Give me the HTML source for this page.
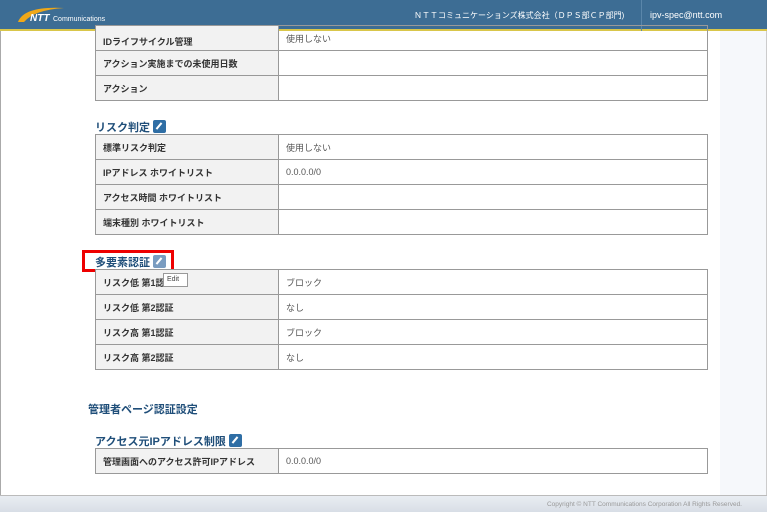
<!DOCTYPE html>
<html><head><meta charset="utf-8"><style>
*{margin:0;padding:0;box-sizing:border-box}
body{width:767px;height:512px;overflow:hidden;background:#fff;font-family:"Liberation Sans","Noto Sans CJK JP",sans-serif;position:relative}
.hdr{position:absolute;left:0;top:0;width:767px;height:31px;background:#3d6d94;border-bottom:2px solid #d9c64a}
.hdr .co{position:absolute;left:414px;top:10px;color:#fff;font-size:8px;white-space:nowrap}
.hdr .sep{position:absolute;left:641px;top:0;width:1px;height:31px;background:#5a86aa}
.hdr .em{position:absolute;left:650px;top:10px;color:#fff;font-size:9px}
.right{position:absolute;left:720px;top:31px;width:47px;height:464px;background:#f6f8fb;border-right:1px solid #ccc}
.left{position:absolute;left:0;top:31px;width:1px;height:464px;background:#aaa}
table{position:absolute;left:95px;width:613px;border-collapse:collapse;font-size:9px;color:#333}
td{border:1px solid #999;height:25px;padding-left:7px}
td.l{width:183px;background:#f2f2f2;font-weight:bold}
td.v{color:#555}
.h{position:absolute;font-size:11px;font-weight:bold;color:#1f4e79}
.ic{display:inline-block;width:13px;height:13px;background:#2f6ea5;border-radius:2px;vertical-align:-2px;margin-left:3px;position:relative}
.ic:after{content:"";position:absolute;left:5px;top:2px;width:2px;height:8px;background:#fff;transform:rotate(40deg)}
.foot{position:absolute;left:0;top:495px;width:767px;height:17px;background:linear-gradient(#e9edf2,#d8dee6);border-top:1px solid #bbb}
.foot span{position:absolute;right:25px;top:5px;font-size:6.5px;color:#999}
</style></head><body>
<div class="hdr">
<svg style="position:absolute;left:14px;top:4px" width="95" height="24"><path d="M4 18 Q10 2 50 4 Q20 6 10 18Z" fill="#f0a818"/><text x="16" y="17" font-family="Liberation Sans" font-weight="bold" font-style="italic" font-size="10" fill="#fff">NTT</text><text x="39" y="17" font-family="Liberation Sans" font-size="7" fill="#fff">Communications</text></svg>
<div class="co">ＮＴＴコミュニケーションズ株式会社（ＤＰＳ部ＣＰ部門)</div>
<div class="sep"></div>
<div class="em">ipv-spec@ntt.com</div>
</div>
<div class="left"></div><div class="right"></div>
<table style="top:25px"><tr><td class="l" style="height:24px;padding-top:6px">IDライフサイクル管理</td><td class="v">使用しない</td></tr><tr><td class="l">アクション実施までの未使用日数</td><td></td></tr><tr><td class="l">アクション</td><td></td></tr></table>
<div class="h" style="left:95px;top:119px">リスク判定<span class="ic"></span></div>
<table style="top:134px"><tr><td class="l">標準リスク判定</td><td class="v">使用しない</td></tr><tr><td class="l">IPアドレス ホワイトリスト</td><td class="v">0.0.0.0/0</td></tr><tr><td class="l">アクセス時間 ホワイトリスト</td><td></td></tr><tr><td class="l">端末種別 ホワイトリスト</td><td></td></tr></table>
<div class="h" style="left:95px;top:254px">多要素認証<span class="ic" style="background:#7a9cc0"></span></div>
<div style="position:absolute;left:82px;top:250px;width:92px;height:22px;border:3px solid #e00"></div>
<table style="top:269px"><tr><td class="l">リスク低 第1認証</td><td class="v">ブロック</td></tr><tr><td class="l">リスク低 第2認証</td><td class="v">なし</td></tr><tr><td class="l">リスク高 第1認証</td><td class="v">ブロック</td></tr><tr><td class="l">リスク高 第2認証</td><td class="v">なし</td></tr></table>
<div style="position:absolute;left:163px;top:273px;width:25px;height:14px;border:1px solid #999;background:#fff;font-size:7px;color:#444;padding:2px 3px">Edit</div>
<div class="h" style="left:88px;top:401px;color:#1f4e79">管理者ページ認証設定</div>
<div class="h" style="left:95px;top:433px">アクセス元IPアドレス制限<span class="ic"></span></div>
<table style="top:448px"><tr><td class="l">管理画面へのアクセス許可IPアドレス</td><td class="v">0.0.0.0/0</td></tr></table>
<div class="foot"><span>Copyright © NTT Communications Corporation All Rights Reserved.</span></div>
</body></html>
